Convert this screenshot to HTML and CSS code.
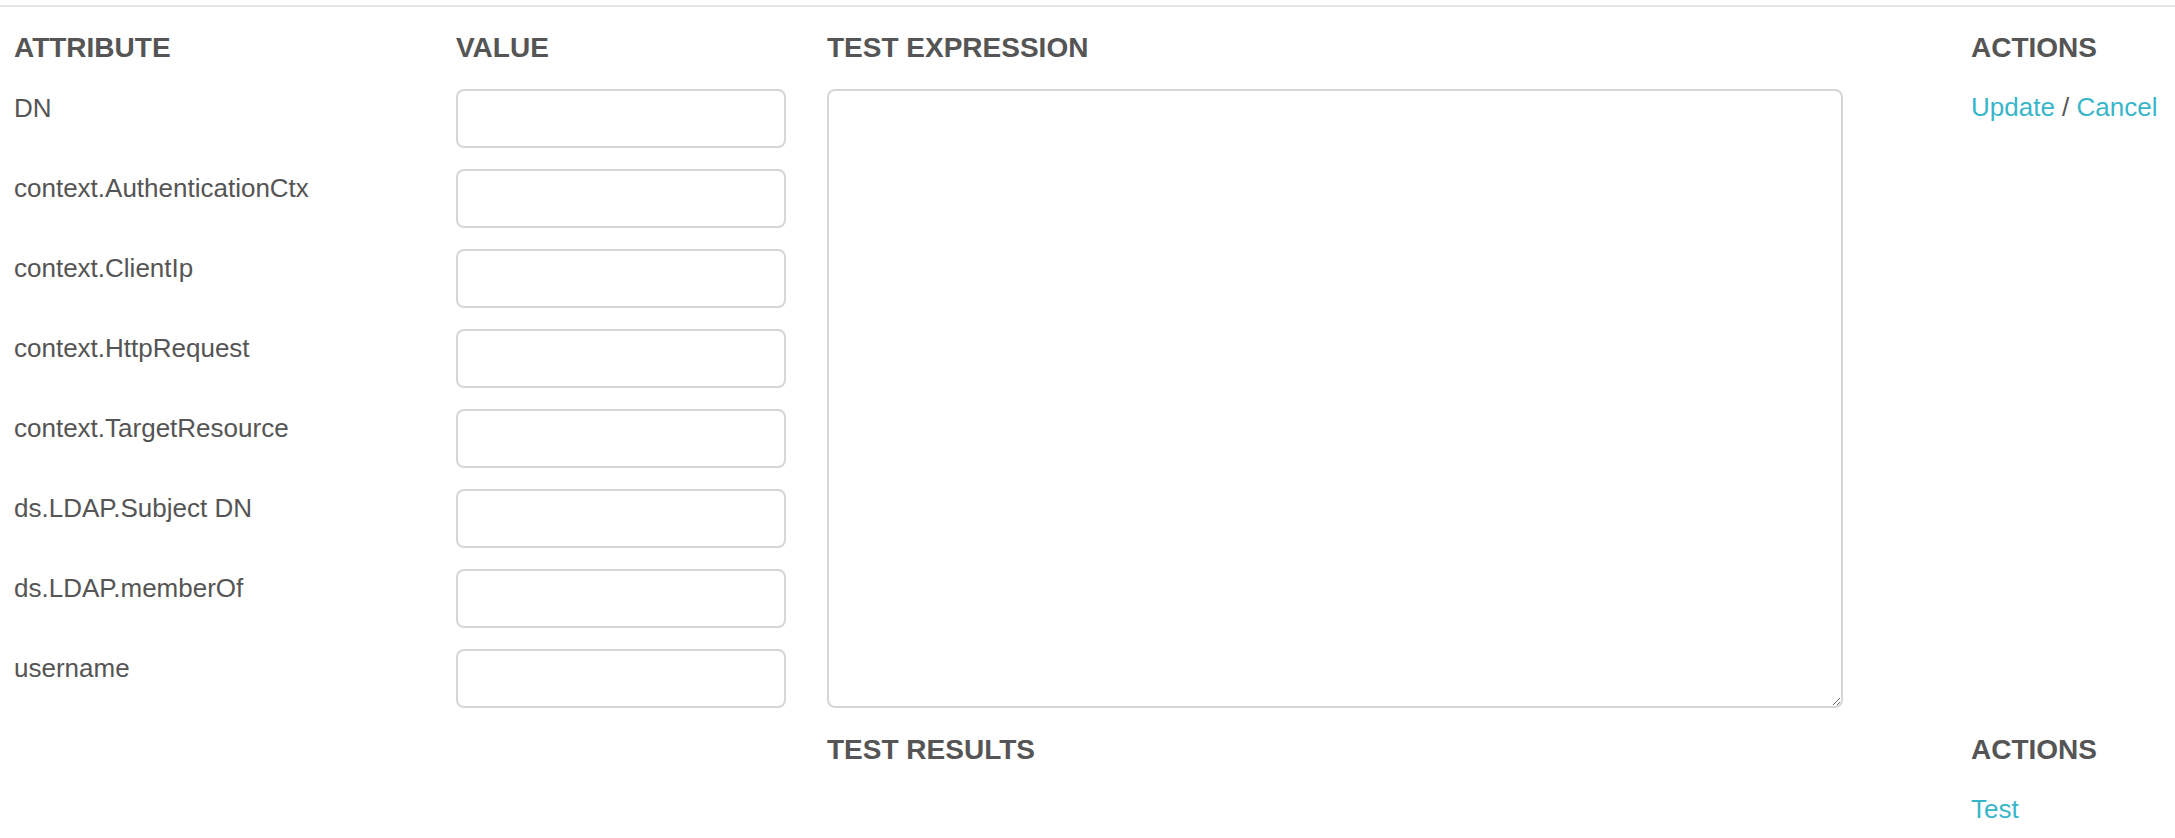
FILE: index.html
```html
<!DOCTYPE html>
<html lang="en">
<head>
<meta charset="utf-8">
<title>Test Expression</title>
<link rel="stylesheet" href="styles.css">
</head>
<body>
<div class="page">
  <div class="grid">
    <div class="head c1">ATTRIBUTE</div>
    <div class="head c2">VALUE</div>
    <div class="head c3">TEST EXPRESSION</div>
    <div class="head c4">ACTIONS</div>

    <div class="label c1">DN</div>
    <div class="c2"><input class="field" type="text"></div>
    <div class="c3 expr"><textarea class="area"></textarea></div>
    <div class="c4 actions"><a class="link" href="#">Update</a> / <a class="link" href="#">Cancel</a></div>

    <div class="label c1">context.AuthenticationCtx</div>
    <div class="c2"><input class="field" type="text"></div>

    <div class="label c1">context.ClientIp</div>
    <div class="c2"><input class="field" type="text"></div>

    <div class="label c1">context.HttpRequest</div>
    <div class="c2"><input class="field" type="text"></div>

    <div class="label c1">context.TargetResource</div>
    <div class="c2"><input class="field" type="text"></div>

    <div class="label c1">ds.LDAP.Subject DN</div>
    <div class="c2"><input class="field" type="text"></div>

    <div class="label c1">ds.LDAP.memberOf</div>
    <div class="c2"><input class="field" type="text"></div>

    <div class="label c1">username</div>
    <div class="c2"><input class="field" type="text"></div>

    <div class="head c3">TEST RESULTS</div>
    <div class="head c4">ACTIONS</div>

    <div class="c4 actions"><a class="link" href="#">Test</a></div>
  </div>
</div>
</body>
</html>
```
FILE: styles.css
```css
html, body {
  margin: 0;
  padding: 0;
  background: #ffffff;
}

body {
  font-family: "Liberation Sans", Arial, Helvetica, sans-serif;
  font-size: 26px;
  color: #555555;
}

.page {
  margin-top: 5px;
  border-top: 2px solid #e6e6e6;
  padding: 20px 0 0 14px;
}

.grid {
  display: grid;
  grid-template-columns: 442px 371px 1144px 1fr;
  grid-auto-rows: auto;
  row-gap: 21px;
}

.c1 { grid-column: 1; }
.c2 { grid-column: 2; }
.c3 { grid-column: 3; }
.c4 { grid-column: 4; }

.head {
  font-size: 28px;
  font-weight: bold;
  line-height: 41px;
  height: 41px;
  color: #555555;
}

.label {
  line-height: 38px;
  height: 59px;
  white-space: nowrap;
}

.field {
  display: block;
  box-sizing: border-box;
  width: 330px;
  height: 59px;
  margin: 0;
  border: 2px solid #d6d6d6;
  border-radius: 8px;
  background: #ffffff;
  outline: none;
}

.expr {
  grid-row: span 8;
  display: flex;
}

.area {
  box-sizing: border-box;
  width: 1016px;
  height: 619px;
  margin: 0;
  border: 2px solid #d6d6d6;
  border-radius: 8px;
  background: #ffffff;
  outline: none;
  resize: both;
}

.actions {
  line-height: 36px;
  white-space: nowrap;
}

.link {
  color: #38b6c9;
  text-decoration: none;
}
```
